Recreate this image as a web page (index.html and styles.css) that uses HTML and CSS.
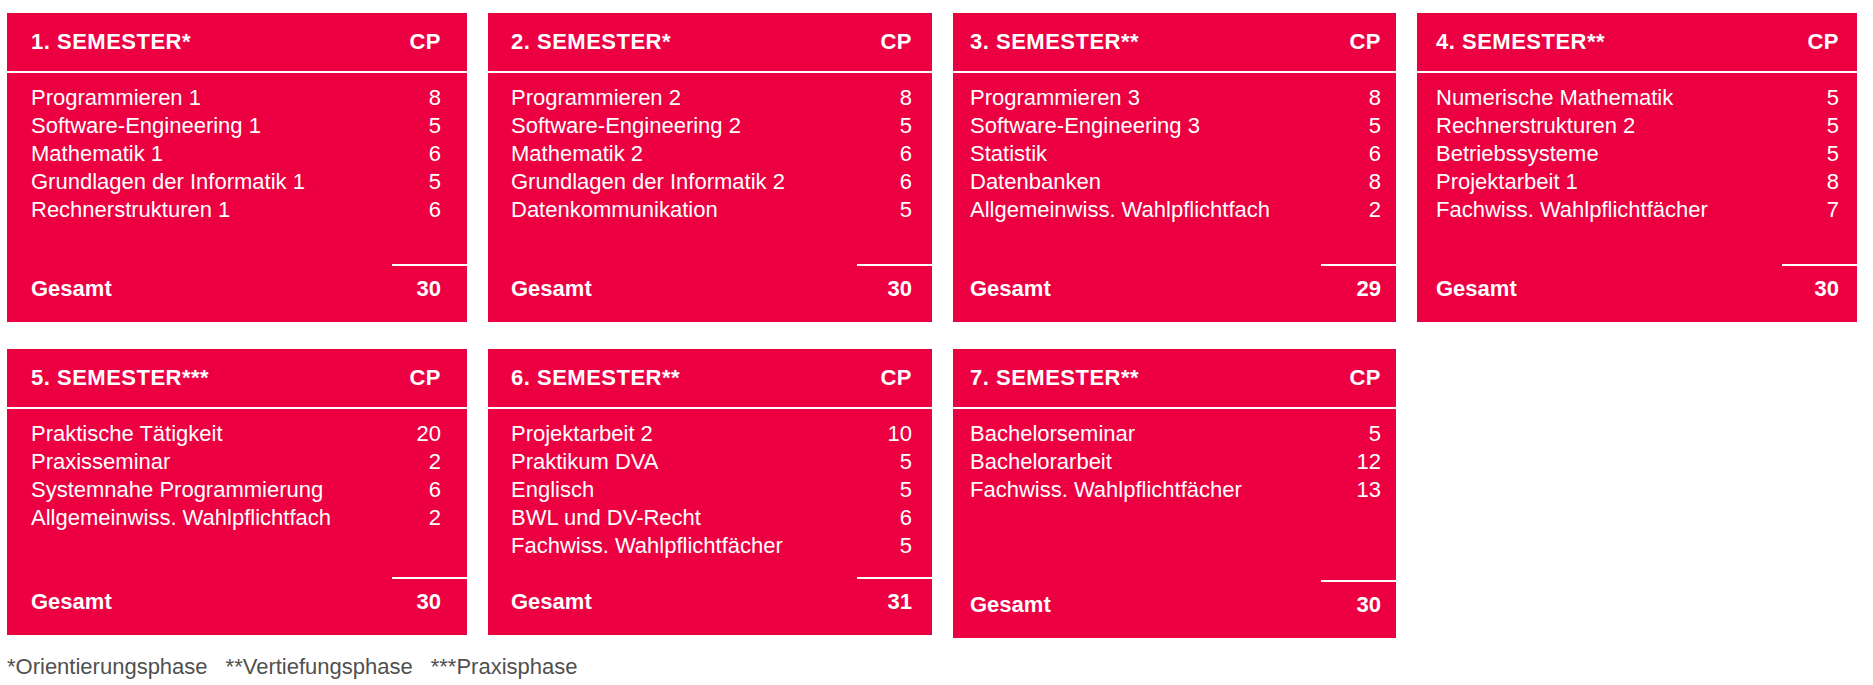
FILE: index.html
```html
<!DOCTYPE html>
<html lang="de">
<head>
<meta charset="utf-8">
<title>Studienverlauf</title>
<link rel="stylesheet" href="styles.css">
</head>
<body>
<main class="page">
  <section class="grid">
    <article class="card">
      <header class="card-head"><h3 class="card-title">1. SEMESTER*</h3><span class="card-cp">CP</span></header>
      <ul class="card-list">
        <li class="item"><span>Programmieren 1</span><span class="cp">8</span></li>
        <li class="item"><span>Software-Engineering 1</span><span class="cp">5</span></li>
        <li class="item"><span>Mathematik 1</span><span class="cp">6</span></li>
        <li class="item"><span>Grundlagen der Informatik 1</span><span class="cp">5</span></li>
        <li class="item"><span>Rechnerstrukturen 1</span><span class="cp">6</span></li>
      </ul>
      <footer class="card-foot"><div class="total"><span>Gesamt</span><span class="cp">30</span></div></footer>
    </article>

    <article class="card">
      <header class="card-head"><h3 class="card-title">2. SEMESTER*</h3><span class="card-cp">CP</span></header>
      <ul class="card-list">
        <li class="item"><span>Programmieren 2</span><span class="cp">8</span></li>
        <li class="item"><span>Software-Engineering 2</span><span class="cp">5</span></li>
        <li class="item"><span>Mathematik 2</span><span class="cp">6</span></li>
        <li class="item"><span>Grundlagen der Informatik 2</span><span class="cp">6</span></li>
        <li class="item"><span>Datenkommunikation</span><span class="cp">5</span></li>
      </ul>
      <footer class="card-foot"><div class="total"><span>Gesamt</span><span class="cp">30</span></div></footer>
    </article>

    <article class="card">
      <header class="card-head"><h3 class="card-title">3. SEMESTER**</h3><span class="card-cp">CP</span></header>
      <ul class="card-list">
        <li class="item"><span>Programmieren 3</span><span class="cp">8</span></li>
        <li class="item"><span>Software-Engineering 3</span><span class="cp">5</span></li>
        <li class="item"><span>Statistik</span><span class="cp">6</span></li>
        <li class="item"><span>Datenbanken</span><span class="cp">8</span></li>
        <li class="item"><span>Allgemeinwiss. Wahlpflichtfach</span><span class="cp">2</span></li>
      </ul>
      <footer class="card-foot"><div class="total"><span>Gesamt</span><span class="cp">29</span></div></footer>
    </article>

    <article class="card">
      <header class="card-head"><h3 class="card-title">4. SEMESTER**</h3><span class="card-cp">CP</span></header>
      <ul class="card-list">
        <li class="item"><span>Numerische Mathematik</span><span class="cp">5</span></li>
        <li class="item"><span>Rechnerstrukturen 2</span><span class="cp">5</span></li>
        <li class="item"><span>Betriebssysteme</span><span class="cp">5</span></li>
        <li class="item"><span>Projektarbeit 1</span><span class="cp">8</span></li>
        <li class="item"><span>Fachwiss. Wahlpflichtfächer</span><span class="cp">7</span></li>
      </ul>
      <footer class="card-foot"><div class="total"><span>Gesamt</span><span class="cp">30</span></div></footer>
    </article>

    <article class="card">
      <header class="card-head"><h3 class="card-title">5. SEMESTER***</h3><span class="card-cp">CP</span></header>
      <ul class="card-list">
        <li class="item"><span>Praktische Tätigkeit</span><span class="cp">20</span></li>
        <li class="item"><span>Praxisseminar</span><span class="cp">2</span></li>
        <li class="item"><span>Systemnahe Programmierung</span><span class="cp">6</span></li>
        <li class="item"><span>Allgemeinwiss. Wahlpflichtfach</span><span class="cp">2</span></li>
      </ul>
      <footer class="card-foot"><div class="total"><span>Gesamt</span><span class="cp">30</span></div></footer>
    </article>

    <article class="card">
      <header class="card-head"><h3 class="card-title">6. SEMESTER**</h3><span class="card-cp">CP</span></header>
      <ul class="card-list">
        <li class="item"><span>Projektarbeit 2</span><span class="cp">10</span></li>
        <li class="item"><span>Praktikum DVA</span><span class="cp">5</span></li>
        <li class="item"><span>Englisch</span><span class="cp">5</span></li>
        <li class="item"><span>BWL und DV-Recht</span><span class="cp">6</span></li>
        <li class="item"><span>Fachwiss. Wahlpflichtfächer</span><span class="cp">5</span></li>
      </ul>
      <footer class="card-foot"><div class="total"><span>Gesamt</span><span class="cp">31</span></div></footer>
    </article>

    <article class="card card--tall">
      <header class="card-head"><h3 class="card-title">7. SEMESTER**</h3><span class="card-cp">CP</span></header>
      <ul class="card-list">
        <li class="item"><span>Bachelorseminar</span><span class="cp">5</span></li>
        <li class="item"><span>Bachelorarbeit</span><span class="cp">12</span></li>
        <li class="item"><span>Fachwiss. Wahlpflichtfächer</span><span class="cp">13</span></li>
      </ul>
      <footer class="card-foot"><div class="total"><span>Gesamt</span><span class="cp">30</span></div></footer>
    </article>
  </section>

  <p class="legend"><span>*Orientierungsphase</span><span>**Vertiefungsphase</span><span>***Praxisphase</span></p>
</main>
</body>
</html>
```

FILE: styles.css
```css
* {
  box-sizing: border-box;
}

html, body {
  margin: 0;
  background: #ffffff;
}

body {
  font-family: "Liberation Sans", Arial, Helvetica, sans-serif;
  color: #ffffff;
}

.page {
  padding: 13px 0 0 7px;
}

.grid {
  display: grid;
  grid-template-columns: 460px 444px 443px 440px;
  grid-template-rows: 309px 286px;
  column-gap: 21px;
  row-gap: 27px;
  align-items: stretch;
}

.card {
  --pl: 24px;
  --pr: 26px;
  display: flex;
  flex-direction: column;
  background: #ec0042;
  color: #ffffff;
}

.card:nth-child(4n+2) { --pl: 23px; --pr: 20px; }
.card:nth-child(4n+3) { --pl: 17px; --pr: 15px; }
.card:nth-child(4n+4) { --pl: 19px; --pr: 18px; }

.card--tall {
  margin-bottom: -3px;
}

.card-head {
  display: flex;
  justify-content: space-between;
  align-items: baseline;
  padding: 16px var(--pr) 14px var(--pl);
  border-bottom: 2px solid #ffffff;
  height: 60px;
}

.card-title,
.card-cp {
  margin: 0;
  font-size: 22px;
  line-height: 26px;
  font-weight: 700;
  letter-spacing: 0.5px;
}

.card-list {
  list-style: none;
  margin: 0;
  padding: 11px var(--pr) 0 var(--pl);
  flex: 1;
}

.item {
  display: flex;
  justify-content: space-between;
  font-size: 22px;
  line-height: 28px;
}

.cp {
  text-align: right;
}

.card-foot {
  display: flex;
  flex-direction: column;
}

.card-foot::before {
  content: "";
  align-self: flex-end;
  width: 75px;
  height: 2px;
  background: #ffffff;
}

.total {
  display: flex;
  justify-content: space-between;
  padding: 10px var(--pr) 20px var(--pl);
  font-size: 22px;
  line-height: 26px;
  font-weight: 700;
}

.legend {
  display: flex;
  gap: 18px;
  margin: 19px 0 0;
  color: #505050;
  font-size: 22px;
  line-height: 26px;
}
```
